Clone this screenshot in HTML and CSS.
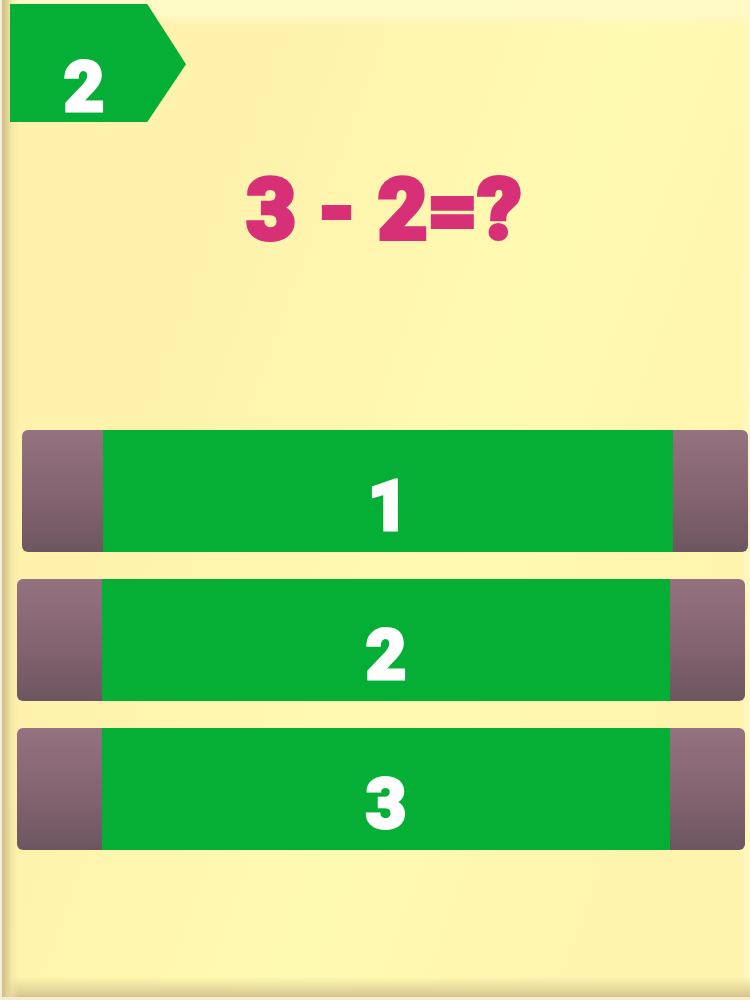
FILE: index.html
```html
<!DOCTYPE html>
<html lang="en">
<head>
    <meta charset="UTF-8">
    <meta name="viewport" content="width=device-width, initial-scale=1.0">
    <title>Math Quiz</title>
    <link rel="stylesheet" href="styles.css">
</head>
<body>

    <main class="card">
        <!-- Question number -->
        <div class="badge">2</div>

        <h1 class="question">3 - 2=?</h1>

        <!-- Answers -->
        <div class="answers">
            <button type="button" class="answer answer-first"><span class="label">1</span></button>
            <button type="button" class="answer"><span class="label">2</span></button>
            <button type="button" class="answer"><span class="label">3</span></button>
        </div>
    </main>

</body>
</html>
```

FILE: styles.css
```css
* {
    box-sizing: border-box;
}

body {
    margin: 0;
    background: #f6efd0;
    font-family: Impact, Roboto, sans-serif;
    font-weight: 900;
}

/* Paper card with worn edges */
.card {
    min-height: 100vh;
    padding: 4px 2px 0 8px;
    border-left: 2px solid #f4efdc;
    border-bottom: 3px solid #f4ecca;
    background:
        linear-gradient(to right, #cfbd87, #e0d194 5px, rgba(240, 228, 163, 0.6) 10px, rgba(254, 244, 174, 0) 18px),
        linear-gradient(to top, #d3c38c, #e2d599 6px, rgba(254, 244, 174, 0) 20px),
        linear-gradient(to left, #fef8c8, rgba(254, 248, 200, 0) 8px),
        linear-gradient(to bottom, #fffac6 14px, rgba(255, 250, 190, 0) 26px),
        linear-gradient(110deg, #fef2ac 25%, #fffab2 58%, #fef4ae 85%);
}

/* Question number */
.badge {
    width: 176px;
    height: 118px;
    padding: 47px 28px 0 0;
    background: #05af35;
    clip-path: polygon(0 0, 78% 0, 100% 51%, 78% 100%, 0 100%);
    color: #fff;
    font-size: 70px;
    line-height: 72px;
    text-align: center;
    -webkit-text-stroke: 3px #fff;
}

.question {
    margin: 38px 0 0;
    padding-left: 10px;
    color: #d73077;
    font-size: 86px;
    font-weight: 900;
    line-height: 100px;
    text-align: center;
    -webkit-text-stroke: 4px #d73077;
}

/* Answer bars */
.answers {
    display: flex;
    flex-direction: column;
    gap: 27px;
    margin-top: 170px;
    padding: 0 3px 0 7px;
}

.answer {
    display: flex;
    height: 122px;
    padding: 0 75px 0 85px;
    border: 0;
    border-radius: 6px;
    background: linear-gradient(#94727f, #846370 55%, #6c5660);
    color: #fff;
    font: inherit;
    font-size: 70px;
    line-height: 72px;
    cursor: pointer;
    -webkit-text-stroke: 3px #fff;
}

.answer-first {
    margin: 0 -3px 0 5px;
    padding-left: 81px;
}

.label {
    flex: 1;
    height: 100%;
    padding: 40px 0 0;
    background: #05af35;
    text-align: center;
}
```
